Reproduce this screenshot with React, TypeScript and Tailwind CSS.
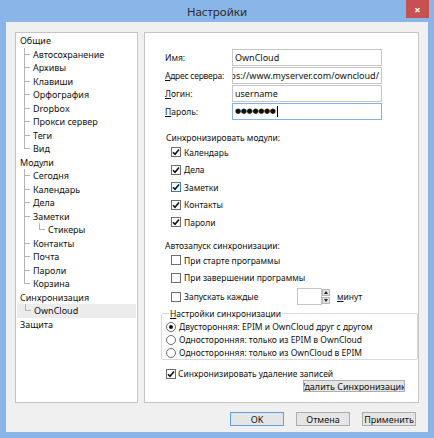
import React from "react";

type TItem = { label: string; level: 0 | 1 | 2; last?: boolean; sel?: boolean };

const tree: TItem[] = [
  { label: "Общие", level: 0 },
  { label: "Автосохранение", level: 1 },
  { label: "Архивы", level: 1 },
  { label: "Клавиши", level: 1 },
  { label: "Орфография", level: 1 },
  { label: "Dropbox", level: 1 },
  { label: "Прокси сервер", level: 1 },
  { label: "Теги", level: 1 },
  { label: "Вид", level: 1, last: true },
  { label: "Модули", level: 0 },
  { label: "Сегодня", level: 1 },
  { label: "Календарь", level: 1 },
  { label: "Дела", level: 1 },
  { label: "Заметки", level: 1 },
  { label: "Стикеры", level: 2, last: true },
  { label: "Контакты", level: 1 },
  { label: "Почта", level: 1 },
  { label: "Пароли", level: 1 },
  { label: "Корзина", level: 1, last: true },
  { label: "Синхронизация", level: 0 },
  { label: "OwnCloud", level: 1, last: true, sel: true },
  { label: "Защита", level: 0 },
];

function Conn({ last }: { last?: boolean }) {
  return (
    <div className="w-[6px] flex flex-col shrink-0">
      <div className="h-[7px] border-l border-b border-[#b4b4b4]" />
      <div className={last ? "flex-1" : "flex-1 border-l border-[#b4b4b4]"} />
    </div>
  );
}

function TreeRow({ it }: { it: TItem }) {
  if (it.level === 0) {
    return <div className="h-[13.5px] flex items-center pl-[4px]">{it.label}</div>;
  }
  if (it.level === 1) {
    return (
      <div className={`h-[13.5px] flex pl-[8px] ${it.sel ? "bg-[#ececec] mx-[1px] pl-[7px]" : ""}`}>
        <Conn last={it.last} />
        <span className="ml-[3px] self-center">{it.label}</span>
      </div>
    );
  }
  return (
    <div className="h-[13.5px] flex pl-[8px]">
      <div className="w-[15px] border-l border-[#b4b4b4] shrink-0" />
      <Conn last={it.last} />
      <span className="ml-[3px] self-center">{it.label}</span>
    </div>
  );
}

function Check({ checked, hover }: { checked?: boolean; hover?: boolean }) {
  return (
    <div
      className={`w-[10px] h-[10px] border bg-white flex items-center justify-center shrink-0 ${
        hover ? "border-[#3c7fb1]" : "border-[#6d6d6d]"
      }`}
    >
      {checked && (
        <svg width="8" height="8" viewBox="0 0 8 8">
          <path d="M1 4.2 L3 6.3 L7 1.5" fill="none" stroke="#111" strokeWidth="1.6" />
        </svg>
      )}
    </div>
  );
}

function Radio({ on }: { on?: boolean }) {
  return (
    <div className="w-[10px] h-[10px] rounded-full border border-[#6d6d6d] bg-white flex items-center justify-center shrink-0">
      {on && <div className="w-[4px] h-[4px] rounded-full bg-[#111]" />}
    </div>
  );
}

function Btn({ children, def }: { children: React.ReactNode; def?: boolean }) {
  return (
    <div
      className={`w-[54px] h-[14px] flex items-center justify-center bg-[#e5e5e5] border ${
        def ? "border-[#5b9fe0]" : "border-[#adadad]"
      }`}
    >
      {children}
    </div>
  );
}

export default function App() {
  return (
    <div className="w-[434px] h-[438px] bg-[#8ab5e8] flex flex-col font-['Noto_Sans',sans-serif] text-[9px] leading-[13px] text-[#111]">
      <div className="h-[22px] relative flex items-center justify-center text-[11.5px] text-[#2a2a2a]">
        Настройки
        <div className="absolute right-[5px] top-0 w-[23px] h-[18px] bg-[#c75050] text-white flex items-center justify-center text-[11px] font-bold">
          ×
        </div>
      </div>
      <div className="mx-[6px] mb-[6px] flex-1 bg-[#f0f0f0] flex flex-col pl-[9px] pr-[9px] pt-[10px]">
        <div className="flex gap-[6px] h-[371px]">
          <div className="w-[123px] bg-white border border-[#c4c4c4] pt-[1px]">
            {tree.map((it, i) => (
              <TreeRow key={i} it={it} />
            ))}
          </div>
          <div className="flex-1 bg-white border border-[#c4c4c4] pl-[20px] pt-[16px] flex flex-col text-[8.5px]">
            <div className="grid grid-cols-[67px_150px] gap-y-[1px]">
              <div className="h-[17px] flex items-center">Имя:</div>
              <div className="h-[17px] border border-[#c6c6c6] flex items-center pl-[2px] text-[9px]">OwnCloud</div>
              <div className="h-[17px] flex items-center whitespace-nowrap tracking-[-0.25px]">
                <span className="underline">А</span>дрес сервера:
              </div>
              <div className="h-[17px] border border-[#c6c6c6] flex items-center justify-end overflow-hidden whitespace-nowrap pr-[2px] text-[9px]">
                https://www.myserver.com/owncloud/
              </div>
              <div className="h-[17px] flex items-center">
                <span className="underline">Л</span>огин:
              </div>
              <div className="h-[17px] border border-[#c6c6c6] flex items-center pl-[2px] text-[9px]">username</div>
              <div className="h-[17px] flex items-center">
                <span className="underline">П</span>ароль:
              </div>
              <div className="h-[17px] border border-[#7eb4ea] flex items-center pl-[2px]">
                <span className="font-['DejaVu_Sans',sans-serif] text-[7px] tracking-[-0.3px]">●●●●●●●</span>
                <span className="w-px h-[11px] bg-black ml-px" />
              </div>
            </div>

            <div className="mt-[10.5px] h-[13px] ml-[1px]">Синхронизировать модули:</div>
            <div className="ml-[6px] flex flex-col">
              {[
                ["Календарь", false],
                ["Дела", false],
                ["Заметки", true],
                ["Контакты", false],
                ["Пароли", false],
              ].map(([l, h]) => (
                <div key={l as string} className="h-[17.5px] flex items-center gap-[3px]">
                  <Check checked hover={h as boolean} />
                  <span>{l as string}</span>
                </div>
              ))}
            </div>

            <div className="mt-[7.5px] h-[13px]">Автозапуск синхронизации:</div>
            <div className="ml-[6px] flex flex-col">
              <div className="h-[17.5px] flex items-center gap-[3px]">
                <Check />
                <span>При старте программы</span>
              </div>
              <div className="h-[17.5px] flex items-center gap-[3px]">
                <Check />
                <span>При завершении программы</span>
              </div>
              <div className="mt-[1.5px] h-[17px] flex items-center">
                <div className="w-[126px] flex items-center gap-[3px]">
                  <Check />
                  <span>Запускать каждые</span>
                </div>
                <div className="w-[25px] h-[17px] border border-[#c6c6c6] bg-white" />
                <div className="w-[8px] h-[17px] flex flex-col gap-[1px] py-[1px]">
                  <div className="flex-1 bg-[#e2e2e2] border border-[#b8b8b8] flex items-center justify-center">
                    <svg width="4" height="3" viewBox="0 0 4 3"><path d="M0 3 L2 0 L4 3 Z" fill="#222" /></svg>
                  </div>
                  <div className="flex-1 bg-[#e2e2e2] border border-[#b8b8b8] flex items-center justify-center">
                    <svg width="4" height="3" viewBox="0 0 4 3"><path d="M0 0 L2 3 L4 0 Z" fill="#222" /></svg>
                  </div>
                </div>
                <span className="ml-[7px]">
                  <span className="underline">м</span>инут
                </span>
              </div>
            </div>

            <fieldset className="-ml-[4px] mt-[2px] border border-[#d9d9d9] rounded-[2px] pl-[4px] pb-0">
              <legend className="ml-[3px] px-[1px] h-[13px]">
                <span className="underline">Н</span>астройки синхронизации
              </legend>
              <div className="h-[13px] flex items-center gap-[3px]">
                <Radio on />
                <span>Двусторонняя: EPIM и OwnCloud друг с другом</span>
              </div>
              <div className="h-[13px] flex items-center gap-[3px]">
                <Radio />
                <span>Односторонняя: только из EPIM в OwnCloud</span>
              </div>
              <div className="h-[13px] flex items-center gap-[3px]">
                <Radio />
                <span>Односторонняя: только из OwnCloud в EPIM</span>
              </div>
            </fieldset>

            <div className="mt-[7px] h-[13px] ml-[1px] flex items-center gap-[2px]">
              <Check checked />
              <span>Синхронизировать удаление записей</span>
            </div>
            <div className="ml-[138px] w-[102px] h-[12px] bg-[#e5e5e5] border border-[#adadad] flex items-center justify-center overflow-hidden whitespace-nowrap text-[9px]">
              Удалить Синхронизацию
            </div>
          </div>
        </div>
        <div className="mt-[9px] flex justify-end gap-[12px] mr-[3px]">
          <Btn def>OK</Btn>
          <Btn>Отмена</Btn>
          <Btn>Применить</Btn>
        </div>
      </div>
    </div>
  );
}
